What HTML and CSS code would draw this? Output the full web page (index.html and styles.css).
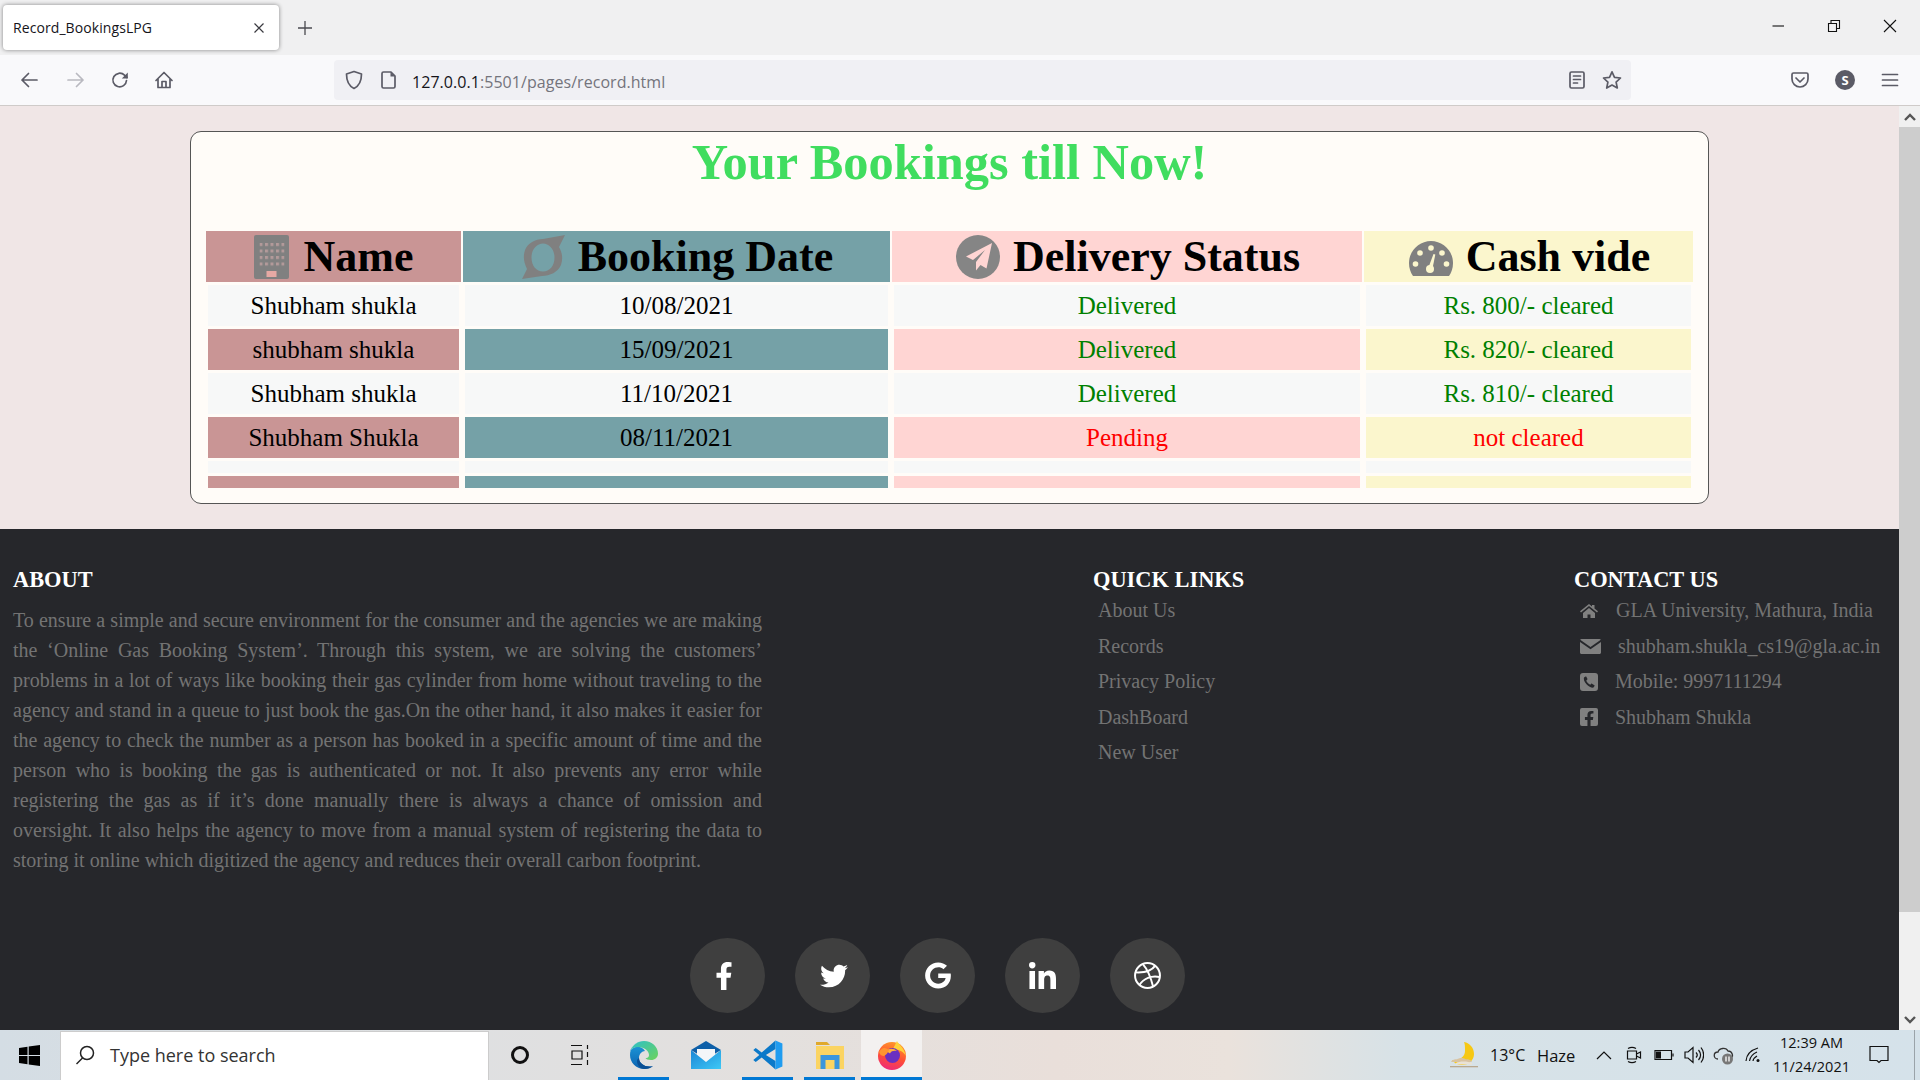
FILE: index.html
```html
<!DOCTYPE html>
<html lang="en">
<head>
<meta charset="utf-8">
<title>Record_BookingsLPG</title>
<link rel="stylesheet" href="styles.css">
</head>
<body>
<div class="screen">
  <div class="tabbar">
    <div class="tab">
      <span class="tab-title">Record_BookingsLPG</span>
      <svg class="tab-close" viewBox="0 0 12 12"><path d="M1.5 1.5l9 9M10.5 1.5l-9 9"/></svg>
    </div>
    <svg class="newtab" viewBox="0 0 16 16"><path d="M8 1v14M1 8h14"/></svg>
    <div class="winctl">
      <span class="winbtn"><svg width="14" height="14" viewBox="0 0 14 14"><path d="M1.5 7h11.5"/></svg></span>
      <span class="winbtn"><svg width="14" height="14" viewBox="0 0 14 14"><path d="M1.5 4.5h8v8h-8zM4 4.5V1.5h8.5v8h-3"/></svg></span>
      <span class="winbtn"><svg width="16" height="16" viewBox="0 0 16 16"><path d="M2 2l12 12M14 2L2 14"/></svg></span>
    </div>
  </div>

  <div class="toolbar">
    <span class="tool"><svg class="ticon" viewBox="0 0 20 20"><path d="M18 10H3M9.5 3.5L3 10l6.5 6.5"/></svg></span>
    <span class="tool tool-fwd"><svg class="ticon ticon-off" viewBox="0 0 20 20"><path d="M2 10h15M10.500 3.500L17 10l-6.500 6.500"/></svg></span>
    <span class="tool"><svg class="ticon" viewBox="0 0 20 20"><path d="M16.500 10.500a6.800 6.800 0 1 1-2-5.300L17 7.500"/><path class="ticon-fill" d="M17.800 2.500v6h-6z"/></svg></span>
    <span class="tool"><svg class="ticon" viewBox="0 0 20 20"><path d="M2 10.500L10 2.500l8 8M4 9v8.500h12V9M8 17.500v-6h4v6"/></svg></span>
    <div class="urlbar">
      <svg class="ticon url-shield" viewBox="0 0 20 20"><path d="M10 1.500l7.500 2.500c0 7-1.500 11.500-7.500 14.500C4 15.500 2.500 11 2.500 4z"/></svg>
      <svg class="ticon url-doc" viewBox="0 0 20 20"><path d="M4.500 2h7.500l4 4v10.500a1.500 1.500 0 0 1-1.500 1.500h-10a1.500 1.500 0 0 1-1.500-1.500v-13a1.500 1.500 0 0 1 1.500-1.500z"/><path class="ticon-fill" d="M11.500 2l4.500 4.500h-4.500z"/></svg>
      <span class="url"><span class="url-host">127.0.0.1</span>:5501/pages/record.html</span>
      <svg class="ticon url-reader" viewBox="0 0 20 20"><path d="M4.500 2h11a1.500 1.500 0 0 1 1.500 1.500v13a1.500 1.500 0 0 1-1.500 1.500h-11a1.500 1.500 0 0 1-1.500-1.500v-13a1.500 1.500 0 0 1 1.500-1.500zM6.500 6h7M6.500 9.500h7M6.500 13h4"/></svg>
      <svg class="ticon url-star" viewBox="0 0 20 20"><path d="M10 1.800l2.500 5.500 6 .7-4.400 4.100 1.200 5.900-5.300-3-5.300 3 1.200-5.900L1.500 8l6-.7z"/></svg>
    </div>
    <span class="tool tool-pocket"><svg class="ticon" viewBox="0 0 20 20"><path d="M3.500 3h13a1.500 1.500 0 0 1 1.500 1.500V9a8 8 0 0 1-16 0V4.500A1.500 1.500 0 0 1 3.500 3zM6 8l4 4 4-4"/></svg></span>
    <span class="tool tool-tight"><span class="avatar">S</span></span>
    <span class="tool tool-tight"><svg class="ticon" viewBox="0 0 20 20"><path d="M2.500 4.500h15M2.500 10h15M2.500 15.500h15"/></svg></span>
  </div>

  <div class="viewport">
    <div class="page">
      <main class="card">
        <h1 class="title">Your Bookings till Now!</h1>
        <table class="bookings">
          <colgroup>
            <col class="col-name"><col class="col-date"><col class="col-status"><col class="col-cash">
          </colgroup>
          <thead>
            <tr>
              <th class="c1"><span class="th-in">
                <svg class="th-icon th-icon-name" width="35" height="44" viewBox="0 0 35 44">
                  <defs><pattern id="win" width="5.500" height="6.500" patternUnits="userSpaceOnUse" x="5.500" y="8"><rect width="3" height="3" fill="#b39a9a"/></pattern></defs>
                  <rect width="35" height="44" rx="2" fill="#808080"/>
                  <rect x="5.500" y="8" width="25" height="26" fill="url(#win)"/>
                  <rect x="12.500" y="36" width="10" height="6" fill="#e6a9a4"/>
                </svg>Name</span></th>
              <th class="c2"><span class="th-in">
                <svg class="th-icon" width="43" height="44" viewBox="0 0 43 44">
                  <path fill="#808080" fill-rule="evenodd" d="M43 0L37 12C40.500 18 41 24 39 30 36 37 28 41 20 41L0 44 5 34C1.500 27 1 21 3 15 6 8 13 4 21 4zM21 8.500C15 8.500 9.500 14 9.500 22.500S14.500 36.500 21 36.500 32.500 31 32.500 22.500 27 8.500 21 8.500z"/>
                </svg>Booking Date</span></th>
              <th class="c3"><span class="th-in">
                <svg class="th-icon" width="44" height="44" viewBox="0 0 44 44">
                  <circle cx="22" cy="22" r="22" fill="#858585"/>
                  <path fill="#ffd5d3" d="M36 8L10 21.500l7 3.500 12-10-9 12v8.500l4.500-5.500 6 3.500z"/>
                </svg>Delivery Status</span></th>
              <th class="c4"><span class="th-in">
                <svg class="th-icon th-gauge" width="44" height="35" viewBox="0 0 44 35">
                  <path fill="#808080" d="M22 0C10 0 0 10 0 22c0 5 1.500 9.500 4 13h36c2.500-3.500 4-8 4-13C44 10 34 0 22 0z"/>
                  <g fill="#fbf6cd"><circle cx="6.500" cy="23" r="2.800"/><circle cx="11" cy="12" r="2.800"/><circle cx="22" cy="7" r="2.800"/><circle cx="33" cy="12" r="2.800"/><circle cx="37.500" cy="23" r="2.800"/><circle cx="21" cy="28" r="4"/><path d="M23.500 27.500l-4-1.200 5-13.300 1.800.5z"/></g>
                </svg>Cash vide</span></th>
            </tr>
          </thead>
          <tbody>
            <tr class="row-light"><td>Shubham shukla</td><td>10/08/2021</td><td class="ok">Delivered</td><td class="ok">Rs. 800/- cleared</td></tr>
            <tr class="row-tint"><td class="c1">shubham shukla</td><td class="c2">15/09/2021</td><td class="c3 ok">Delivered</td><td class="c4 ok">Rs. 820/- cleared</td></tr>
            <tr class="row-light"><td>Shubham shukla</td><td>11/10/2021</td><td class="ok">Delivered</td><td class="ok">Rs. 810/- cleared</td></tr>
            <tr class="row-tint"><td class="c1">Shubham Shukla</td><td class="c2">08/11/2021</td><td class="c3 bad">Pending</td><td class="c4 bad">not cleared</td></tr>
            <tr class="row-light row-empty"><td></td><td></td><td></td><td></td></tr>
            <tr class="row-tint row-empty"><td class="c1"></td><td class="c2"></td><td class="c3"></td><td class="c4"></td></tr>
          </tbody>
        </table>
      </main>

      <footer class="footer">
        <div class="footer-cols">
          <section class="about">
            <h6 class="fhead">ABOUT</h6>
            <p class="about-text">To ensure a simple and secure environment for the consumer and the agencies we are making the ‘Online Gas Booking System’. Through this system, we are solving the customers’ problems in a lot of ways like booking their gas cylinder from home without traveling to the agency and stand in a queue to just book the gas.On the other hand, it also makes it easier for the agency to check the number as a person has booked in a specific amount of time and the person who is booking the gas is authenticated or not. It also prevents any error while registering the gas as if it’s done manually there is always a chance of omission and oversight. It also helps the agency to move from a manual system of registering the data to storing it online which digitized the agency and reduces their overall carbon footprint.</p>
          </section>
          <section class="quick">
            <h6 class="fhead">QUICK LINKS</h6>
            <ul class="flist">
              <li>About Us</li><li>Records</li><li>Privacy Policy</li><li>DashBoard</li><li>New User</li>
            </ul>
          </section>
          <section class="contact">
            <h6 class="fhead">CONTACT US</h6>
            <ul class="flist clist">
              <li><svg class="ci ci-home" viewBox="0 0 18 14"><path d="M9 0L0 7.200l1 1.200L9 2l8 6.400 1-1.200-3.500-2.800V1h-2.500v1.400zM3 9v5h4.500v-3.500h3V14H15V9L9 4z"/></svg>GLA University, Mathura, India</li>
              <li><svg class="ci ci-mail" viewBox="0 0 21 15"><path d="M1.500 0h18c.6 0 1.100.3 1.300.8L10.500 8 .2.800C.4.300.9 0 1.500 0zM0 3v10.500C0 14.300.7 15 1.500 15h18c.8 0 1.500-.7 1.500-1.500V3L10.500 10.300z"/></svg>shubham.shukla_cs19@gla.ac.in</li>
              <li><svg class="ci ci-sq" viewBox="0 0 18 18"><path fill-rule="evenodd" d="M3 0h12a3 3 0 0 1 3 3v12a3 3 0 0 1-3 3H3a3 3 0 0 1-3-3V3a3 3 0 0 1 3-3zM5.500 3.500L4 4.500c-.5 1.500 0 4 2.500 6.800S12 15 13.500 14.500l1-1.500c.2-.3.100-.6-.1-.8l-2.400-1.500c-.3-.2-.6-.1-.8.100l-.9 1c-1-.3-1.700-.9-2.500-1.700S6.400 8.500 6.300 7.500l1-.9c.2-.2.300-.5.1-.8L6.200 3.600c-.2-.2-.4-.2-.7-.1z"/></svg>Mobile: 9997111294</li>
              <li><svg class="ci ci-sq" viewBox="0 0 448 448"><path d="M400 0H48A48 48 0 0 0 0 48v352a48 48 0 0 0 48 48h137.250V295.690h-63V224h63v-54.640c0-62.150 37-96.480 93.670-96.480 27.140 0 55.520 4.840 55.520 4.840v61h-31.270c-30.810 0-40.420 19.120-40.420 38.730V224h68.780l-11 71.690h-57.780V448H400a48 48 0 0 0 48-48V48a48 48 0 0 0-48-48z"/></svg>Shubham Shukla</li>
            </ul>
          </section>
        </div>
        <div class="socials">
          <span class="soc"><svg class="soc-f" viewBox="0 0 320 512"><path d="M279.140 288l14.220-92.660h-88.910v-60.130c0-25.350 12.420-50.060 52.240-50.060h40.420V6.260S260.430 0 225.360 0c-73.220 0-121.080 44.380-121.080 124.720v70.620H22.890V288h81.390v224h100.170V288z"/></svg></span>
          <span class="soc"><svg class="soc-t" viewBox="0 0 512 512"><path d="M459.37 151.716c.325 4.548.325 9.097.325 13.645 0 138.720-105.583 298.558-298.558 298.558-59.452 0-114.680-17.219-161.137-47.106 8.447.974 16.568 1.299 25.340 1.299 49.055 0 94.213-16.568 130.274-44.832-46.132-.975-84.792-31.188-98.112-72.772 6.498.974 12.995 1.624 19.818 1.624 9.421 0 18.843-1.300 27.614-3.573-48.081-9.747-84.143-51.980-84.143-102.985v-1.299c13.969 7.797 30.214 12.670 47.431 13.319-28.264-18.843-46.781-51.005-46.781-87.391 0-19.492 5.197-37.360 14.294-52.954 51.655 63.675 129.300 105.258 216.365 109.807-1.624-7.797-2.599-15.918-2.599-24.040 0-57.828 46.782-104.934 104.934-104.934 30.213 0 57.502 12.670 76.670 33.137 23.715-4.548 46.456-13.320 66.599-25.340-7.798 24.366-24.366 44.833-46.132 57.827 21.117-2.273 41.584-8.122 60.426-16.243-14.292 20.791-32.161 39.308-52.628 54.253z"/></svg></span>
          <span class="soc"><svg class="soc-g" viewBox="0 0 488 512"><path d="M488 261.800C488 403.300 391.100 504 248 504 110.800 504 0 393.200 0 256S110.800 8 248 8c66.800 0 123 24.500 166.300 64.900l-67.500 64.900C258.500 52.600 94.300 116.600 94.300 256c0 86.500 69.100 156.600 153.700 156.600 98.200 0 135-70.400 140.800-106.900H248v-85.300h236.100c2.300 12.700 3.900 24.900 3.900 41.400z"/></svg></span>
          <span class="soc"><svg class="soc-in" viewBox="0 0 448 448"><path d="M100.280 448H7.400V148.900h92.880zM53.790 108.100C24.090 108.100 0 83.500 0 53.800a53.790 53.790 0 0 1 107.580 0c0 29.700-24.100 54.300-53.790 54.300zM447.900 448h-92.680V302.400c0-34.700-.7-79.200-48.290-79.200-48.290 0-55.690 37.700-55.690 76.700V448h-92.780V148.900h89.080v40.800h1.300c12.400-23.500 42.690-48.300 87.880-48.300 94 0 111.280 61.900 111.280 142.300V448z"/></svg></span>
          <span class="soc"><svg class="soc-d" viewBox="0 0 26 26"><circle cx="13" cy="13" r="12"/><path d="M8.500 2C13 7 16 14 18.500 24M20.500 3.500C17 8.500 10 10.500 1.500 10M24.800 14.500C17 12.500 9 16 5 22.500"/></svg></span>
        </div>
      </footer>
    </div>
    <div class="scrollbar">
      <span class="sarrow"><svg width="12" height="8" viewBox="0 0 12 8"><path d="M1 7l5-5 5 5"/></svg></span>
      <span class="sthumb"></span>
      <span class="strack"></span>
      <span class="sarrow"><svg width="12" height="8" viewBox="0 0 12 8"><path d="M1 1l5 5 5-5"/></svg></span>
    </div>
  </div>

  <div class="taskbar">
    <span class="tb-win"><svg width="21" height="21" viewBox="0 0 21 21"><path d="M0 3l8.500-1.200v8.200H0zM9.700 1.600L21 0v10H9.700zM0 11h8.500v8.200L0 18zM9.700 11H21v10L9.700 19.400z"/></svg></span>
    <div class="tb-search">
      <svg class="tb-lens" width="20" height="20" viewBox="0 0 20 20"><circle cx="12" cy="8" r="6.500"/><path d="M7.500 13L1.500 19"/></svg>
      <span>Type here to search</span>
    </div>
    <span class="tb-slot"><svg width="20" height="20" viewBox="0 0 20 20"><circle cx="10" cy="10" r="7.500" class="tb-ring"/></svg></span>
    <span class="tb-slot"><svg class="tb-line" width="20" height="22" viewBox="0 0 20 22"><path d="M1 1.500h11M1 20.500h11M2 7h10v8H2zM17.500 1v4M17.500 8v5M17.500 16v5"/></svg></span>
    <span class="tb-app tb-on">
      <svg width="30" height="30" viewBox="0 0 30 30">
        <defs>
          <linearGradient id="eg" x1="0" y1="0" x2="1" y2="1"><stop offset="0" stop-color="#2cc0c8"/><stop offset="1" stop-color="#6ed35b"/></linearGradient>
          <linearGradient id="eb" x1="0" y1="0" x2="0" y2="1"><stop offset="0" stop-color="#1e9fde"/><stop offset="1" stop-color="#0c62b0"/></linearGradient>
        </defs>
        <path fill="url(#eb)" d="M15 1C6.500 1 1 7.500 1 15s6 14 14 14c3.500 0 6.500-1 9-3-7 2-14-2-14-8 0-4 3-7 6-7-4-6-11-5-15 0C3 6 8 1 15 1z"/>
        <path fill="url(#eg)" d="M15 1c8 0 14 6 14 12.500 0 4-3 6.500-7 6.500-3 0-5-1-5.500-2 3 0 3.500-1.500 3.500-3 0-4-4.500-8-11-8-3.500 0-6 1.500-7 3C3.500 5 9 1 15 1z"/>
        <path fill="#0a4f94" d="M10 18c0 6 7 10 14 8-2 2-5 3-8 3-5 0-8-4-8-8 0-1 .5-2 2-3z"/>
      </svg>
    </span>
    <span class="tb-app">
      <svg width="30" height="28" viewBox="0 0 30 28">
        <defs><linearGradient id="mg" x1="0" y1="0" x2="1" y2="1"><stop offset="0" stop-color="#1a86d6"/><stop offset="1" stop-color="#3ec8f6"/></linearGradient></defs>
        <path fill="#0d5fa8" d="M0 9L15 0l15 9-15 9z"/>
        <path fill="#f4f6f8" d="M6 8h18v8l-9 6-9-6z"/>
        <path fill="url(#mg)" d="M0 9l15 12L30 9v19H0z"/>
      </svg>
    </span>
    <span class="tb-app tb-on">
      <svg width="30" height="30" viewBox="0 0 100 100">
        <path fill="#0b79c9" d="M75 2L29 42 9 27 1 33 21 50 1 67 9 73 29 58 75 98V70L43 50 75 30z"/>
        <path fill="#1f9cf0" d="M75 2L98 12V88L75 98z"/>
      </svg>
    </span>
    <span class="tb-app tb-on">
      <svg width="28" height="27" viewBox="0 0 28 27">
        <path fill="#e0a92c" d="M0 0h11l3 3h-14z"/>
        <path fill="#fbd462" d="M0 4h28v23H0z"/>
        <path fill="#3a96dd" d="M4.500 13h19v14h-5v-9h-9v9h-5z"/>
      </svg>
    </span>
    <span class="tb-app tb-on tb-active">
      <svg width="28" height="29" viewBox="0 0 28 29">
        <defs>
          <linearGradient id="ff" x1="0.700" y1="0" x2="0.400" y2="1"><stop offset="0" stop-color="#ff9a2a"/><stop offset="0.550" stop-color="#ff5034"/><stop offset="1" stop-color="#ee2a78"/></linearGradient>
        </defs>
        <circle cx="14" cy="15" r="14" fill="url(#ff)"/>
        <path fill="#ffd23a" d="M19 0c1 3 7 6 9 15-3-5-8-7-13-7z"/>
        <circle cx="14.500" cy="14.500" r="7.500" fill="#6a2fc0"/>
        <path fill="#ffb03a" d="M8 10c3-3 8-3 11 0-3-.5-6 0-7 2.500z"/>
        <path fill="#ff9430" d="M1 11c3-5 6-5 10-2-1 3-3 5-5 6-2 0-4-1-5-4z"/>
      </svg>
    </span>

    <svg class="tb-weather" width="30" height="27" viewBox="0 0 30 27">
      <path fill="#f6c814" d="M14 0C20 1 24 6 24 12 24 18 19 23 12 23 8 23 4 21 2 18 9 19 15 15 15 9 15 5 15 2 14 0z"/>
      <path fill="#d8c3a2" d="M1 20c1-2 4-3 6-2.500 2-2 7-2 9 0 2-.5 5 .5 6 2.500z"/>
      <path fill="#e9e2d6" d="M6 21c3-2 12-2 16 0v1.500H6z"/>
      <path fill="#b9a98f" d="M0 24h28v1.300H0z"/>
    </svg>
    <span class="tb-temp">13°C</span>
    <span class="tb-haze">Haze</span>
    <span class="tray tray-first"><svg class="tb-line" width="16" height="10" viewBox="0 0 16 10"><path d="M1 9l7-7 7 7"/></svg></span>
    <span class="tray"><svg class="tb-line" width="16" height="18" viewBox="0 0 16 18"><path d="M1.500 5h9v8h-9zM10.500 8l4-2v6l-4-2M2 2.500a8 8 0 0 1 8 0M2 15.500a8 8 0 0 0 8 0"/></svg></span>
    <span class="tray"><svg class="tb-line" width="20" height="12" viewBox="0 0 20 12"><path d="M1 1.500h16.500v9H1z"/><path class="tb-fill" d="M2 2.500h5v7H2z"/><path d="M19 4.500v3"/></svg></span>
    <span class="tray"><svg class="tb-line" width="20" height="18" viewBox="0 0 20 18"><path d="M1 6h3l5-4.500v15L4 12H1zM12 6.500c1.500 1.500 1.500 3.500 0 5M14.500 4c2.500 3 2.500 7 0 10M17 1.500c3.500 4.500 3.500 10.500 0 15"/></svg></span>
    <span class="tray"><svg width="22" height="20" viewBox="0 0 22 20"><path fill="none" stroke="#333" stroke-width="1.300" d="M5 14c-5 0-5-7 0-7 1-4 8-5 10-1 4 0 6 5 3 7"/><circle cx="14.500" cy="14" r="5.500" fill="#777"/><path d="M13 11.500v5M16 11.500v5" stroke="#fff" stroke-width="1.300"/></svg></span>
    <span class="tray"><svg class="tb-line" width="18" height="16" viewBox="0 0 18 16"><path d="M1 14c.5-6 5-11 12-13M4.500 14c.5-3.500 3-7 7.500-9M8 14c.2-2 1.500-3.500 4-5"/><circle class="tb-fill" cx="13" cy="13.500" r="1.500"/></svg></span>
    <div class="tb-clock"><span>12:39 AM</span><span>11/24/2021</span></div>
    <span class="tb-notify"><svg class="tb-line" width="20" height="20" viewBox="0 0 20 20"><path d="M1 1.500h18v14h-7l-2 2-2-2H1z"/></svg></span>
    <span class="tb-desktop"></span>
  </div>
</div>
</body>
</html>
```
FILE: styles.css
```css
* { box-sizing: border-box; }
html, body { margin: 0; padding: 0; }
body { font-family: "Liberation Serif", serif; background: #f0e6e6; }
.screen { width: 1920px; height: 1080px; display: flex; flex-direction: column; overflow: hidden; }

/* browser chrome */
.tabbar { height: 55px; flex: none; background: #f0f0f1; display: flex; align-items: flex-start; font-family: "Open Sans", sans-serif; }
.tab { width: 276px; height: 45px; margin: 5px 0 0 3px; background: #fff; border-radius: 4px; box-shadow: 0 0 4px rgba(0,0,0,.45); display: flex; align-items: center; justify-content: space-between; padding: 0 14px 0 10px; }
.tab-title { font-size: 14px; color: #15141a; letter-spacing: .08px; }
.tab-close { width: 12px; height: 12px; fill: none; stroke: #3a3a40; stroke-width: 1.2; }
.newtab { width: 16px; height: 16px; margin: 20px 0 0 18px; fill: none; stroke: #4a4a50; stroke-width: 1.3; }
.winctl { margin-left: auto; margin-right: 2px; display: flex; height: 52px; }
.winbtn { width: 56px; display: flex; align-items: center; justify-content: center; }
.winbtn svg { fill: none; stroke: #111; stroke-width: 1.1; }
.toolbar { height: 51px; flex: none; background: #f9f9fb; border-bottom: 1px solid #cfcbc9; display: flex; align-items: center; padding: 0 0 0 7px; font-family: "Open Sans", sans-serif; }
.tool { width: 44px; height: 40px; display: flex; align-items: center; justify-content: center; flex: none; }
.tool-fwd { margin-left: 3px; }
.tool-pocket { margin-left: 147px; }
.tool-tight { margin-left: 1px; }
.ticon { width: 20px; height: 20px; fill: none; stroke: #5b5b66; stroke-width: 1.700; stroke-linejoin: round; stroke-linecap: round; flex: none; }
.ticon-off { stroke: #b9b9c0; }
.ticon-fill { fill: #5b5b66; stroke: none; }
.urlbar { width: 1297px; height: 40px; margin-left: 148px; background: #f0f0f4; border-radius: 4px; display: flex; align-items: center; padding-left: 10px; flex: none; }
.url-doc { margin-left: 15px; }
.url { margin-left: 13px; padding-top: 3px; font-size: 16px; color: #74747c; letter-spacing: .05px; }
.url-host { color: #15141a; }
.url-reader { margin-left: auto; }
.url-star { margin: 0 9px 0 15px; }
.avatar { width: 20px; height: 20px; border-radius: 50%; background: #5b5b66; color: #fff; font-size: 13px; font-weight: 700; display: flex; align-items: center; justify-content: center; }

/* viewport */
.viewport { flex: 1; min-height: 0; display: flex; }
.page { flex: 1; min-width: 0; display: flex; flex-direction: column; padding-top: 25px; }
.scrollbar { width: 21px; flex: none; background: #f0f0f0; display: flex; flex-direction: column; }
.sarrow { height: 21px; display: flex; align-items: center; justify-content: center; flex: none; }
.sarrow svg { fill: none; stroke: #555; stroke-width: 2.400; }
.sthumb { height: 785px; background: #cdcdcd; flex: none; }
.strack { flex: 1; }

/* card */
.card { width: 1519px; height: 373px; flex: none; margin: 0 auto; background: #fffcf8; border: 1px solid #555; border-radius: 11px; padding: 0 13px; }
.title { margin: 0; height: 96px; font-size: 50.4px; line-height: 60px; font-weight: 700; color: #40dd5f; text-align: center; }
.bookings { border-collapse: separate; border-spacing: 2px 3px; table-layout: fixed; width: 1491px; }
.col-name { width: 255px; }
.col-date { width: 427px; }
.col-status { width: 470px; }
.col-cash { width: 329px; }
.bookings th { height: 51px; padding: 0; font-size: 44px; line-height: 51px; font-weight: 700; color: #000; text-align: center; white-space: nowrap; overflow: hidden; }
.th-in { display: flex; height: 51px; align-items: center; justify-content: center; }
.th-icon { margin-left: 2.500px; margin-right: 12.500px; flex: none; }
.th-icon-name { margin-left: 0; margin-right: 15px; }
.th-gauge { margin-top: 3px; }
.bookings td { height: 41px; padding: 0; font-size: 25px; line-height: 41px; text-align: center; border-left: 2px solid #fffcf8; border-right: 2px solid #fffcf8; color: #000; }
.row-light td { background: #f7f8f8; }
.row-empty td { height: 12px; line-height: 12px; }
.c1 { background: #c99595; }
.c2 { background: #75a1a7; }
.c3 { background: #ffd5d3; }
.c4 { background: #fbf6cd; }
.bookings td.ok { color: #008000; }
.bookings td.bad { color: #ff0000; }

/* footer */
.footer { flex: 1; min-height: 0; margin-top: 25px; background: #26272b; display: flex; flex-direction: column; padding: 36px 0 17px 13px; }
.footer-cols { display: grid; grid-template-columns: 1080px 481px 1fr; }
.fhead { margin: 0; font-size: 22.4px; line-height: 30px; font-weight: 700; color: #fff; }
.about { width: 749px; }
.about-text { margin: 10px 0 0; font-size: 20px; line-height: 30px; color: #737373; text-align: justify; }
.flist { list-style: none; margin: -2px 0 0; padding: 0 0 0 5px; font-size: 20px; line-height: 35.500px; color: #737373; }
.clist { padding-left: 6px; }
.clist li { display: flex; align-items: center; white-space: nowrap; }
.ci { fill: #808080; flex: none; }
.ci-home { width: 18px; height: 14px; margin-right: 18px; }
.ci-mail { width: 21px; height: 15px; margin-right: 17px; }
.ci-sq { width: 18px; height: 18px; margin-right: 17px; }
.socials { margin-top: auto; display: flex; justify-content: flex-start; gap: 30px; padding-left: 677px; }
.soc { width: 75px; height: 75px; border-radius: 50%; background: #3f3f3f; display: flex; align-items: center; justify-content: center; }
.soc svg { fill: #fff; }
.soc-f { width: 18px; height: 28px; margin-right: 8px; }
.soc-t { width: 28px; height: 28px; margin-left: 2px; }
.soc-g { width: 26px; height: 27px; }
.soc-in { width: 27px; height: 27px; }
.soc svg.soc-d { width: 27px; height: 27px; fill: none; stroke: #fff; stroke-width: 1.900; }

/* taskbar */
.taskbar { height: 50px; flex: none; display: flex; align-items: center; background: linear-gradient(90deg, #d4dde4 0%, #dfe0e1 25%, #e3e0de 40%, #e9dfda 55%, #eae2dc 64%, #d7e2e7 73%, #d5e2ea 100%); font-family: "Open Sans", sans-serif; color: #111; }
.tb-win { width: 59px; display: flex; justify-content: center; flex: none; margin-right: 2px; }
.tb-win svg { fill: #000; }
.tb-search { width: 429px; height: 49px; align-self: flex-end; background: #fff; border: 1px solid #ccc; border-width: 1px 1px 0; display: flex; align-items: center; padding-left: 14px; padding-bottom: 2px; font-size: 18px; color: #333; flex: none; margin-left: -1px; }
.tb-lens { fill: none; stroke: #222; stroke-width: 1.500; margin-right: 15px; flex: none; }
.tb-slot { width: 60px; display: flex; justify-content: center; flex: none; }
.tb-search + .tb-slot { margin-left: 1px; }
.tb-slot + .tb-slot { margin-right: -1px; }
.tb-ring { fill: none; stroke: #111; stroke-width: 3; }
.tb-line { fill: none; stroke: #111; stroke-width: 1.200; }
.tb-fill { fill: #111; stroke: none; }
.tb-app { width: 51px; height: 50px; margin-left: 11px; display: flex; align-items: center; justify-content: center; padding-top: 3px; border-bottom: 3px solid transparent; flex: none; }
.tb-slot + .tb-app { margin-left: 9px; }
.tb-on { border-bottom-color: #0078d4; }
.tb-active { width: 61px; margin-left: 6px; background: #f3f1f0; }
.tb-weather { margin-left: auto; flex: none; }
.tb-temp { margin-left: 10px; width: 36px; font-size: 16px; white-space: nowrap; }
.tb-haze { margin-left: 11px; width: 38px; font-size: 16.500px; }
.tray { width: 30px; display: flex; justify-content: center; flex: none; }
.tray-first { margin-left: 14px; }
.tb-clock { width: 85px; display: flex; flex-direction: column; align-items: center; font-size: 14.500px; line-height: 24px; white-space: nowrap; flex: none; }
.tb-notify { width: 49px; display: flex; justify-content: center; flex: none; }
.tb-desktop { width: 17px; height: 50px; flex: none; position: relative; }
.tb-desktop::after { content: ""; position: absolute; left: 11px; top: 0; bottom: 0; width: 1px; background: #9aa3a9; }
```
